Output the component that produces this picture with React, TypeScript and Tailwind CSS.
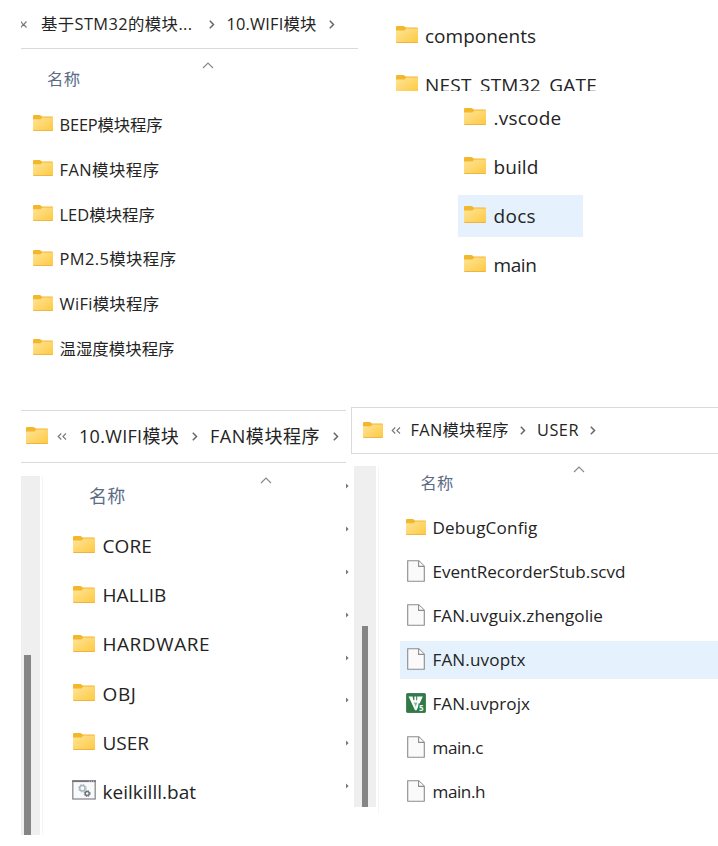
import { useLayoutEffect, useRef } from "react";

type Kind = "folder" | "file" | "keil" | "bat";
type Entry = { name: string; width: number; kind?: Kind; selected?: boolean };

/* Single-line label whose tracking is spread so that it fills `width`. */
function Label({ text, width, className = "" }: { text: string; width: number; className?: string }) {
  const ref = useRef<HTMLSpanElement>(null);
  useLayoutEffect(() => {
    const el = ref.current;
    if (!el) return;
    el.style.letterSpacing = "0px";
    const natural = el.getBoundingClientRect().width;
    el.style.letterSpacing = `${(width - natural) / text.length}px`;
  }, [text, width]);
  return (
    <span className={`shrink-0 whitespace-pre leading-6 ${className}`} style={{ width }}>
      <span ref={ref}>{text}</span>
    </span>
  );
}

function Folder({ className = "" }: { className?: string }) {
  return (
    <svg viewBox="0 0 22 17" preserveAspectRatio="none" className={`shrink-0 ${className}`}>
      <defs>
        <linearGradient id="folderFace" x1="0" y1="0" x2="1" y2="1">
          <stop offset="0" stopColor="#ffe49a" />
          <stop offset="1" stopColor="#fdc93f" />
        </linearGradient>
      </defs>
      <path d="M0 1.2Q0 0 1.2 0H7.4Q8 0 8.5.6L9.8 1.5H20.8Q22 1.5 22 2.7V8H0Z" fill="#f3b72c" />
      <path d="M0 4.6H7.6Q8.4 4.6 9 4L10.4 2.6H22V15.9Q22 17 20.9 17H1.1Q0 17 0 15.9Z" fill="url(#folderFace)" />
      <path d="M.4 16.5H21.6" stroke="#eab544" strokeWidth="1" />
    </svg>
  );
}

function FileIcon() {
  return (
    <svg viewBox="0 0 18 22" className="mb-[3px] ml-[1px] h-[22px] w-[18px] shrink-0">
      <path d="M.7.7H11.8L17.3 6.2V21.3H.7Z" fill="#fafafa" stroke="#8c8c8c" strokeWidth="1.1" />
      <path d="M11.6.9V6.4H17.2" fill="#fff" stroke="#8c8c8c" strokeWidth="1.1" />
    </svg>
  );
}

function KeilIcon() {
  return (
    <svg viewBox="0 0 20 20" className="mb-[3px] h-5 w-5 shrink-0">
      <rect x=".3" y=".3" width="19.4" height="19.4" rx="1.6" fill="#2f7a46" stroke="#24613a" strokeWidth=".6" />
      <path d="M2.6 3.4H6.6L7.4 7.2H8.4V3.4H10.2V7.2H11.2V3.4H16.8L10.6 17.2H9Z" fill="#fff" />
      <path d="M7.6 9.6H11.4L9.7 14Z" fill="#8fbd9c" />
      <path d="M12.4 10.5H19V19H12.4Z" fill="#2f7a46" />
      <text x="12.9" y="17.6" fontSize="8" fontWeight="700" fill="#e9f5ec" fontFamily="Open Sans, sans-serif">5</text>
    </svg>
  );
}

function BatIcon() {
  return (
    <svg viewBox="0 0 24 20" className="mb-[3px] h-5 w-6 shrink-0">
      <rect x=".8" y=".8" width="22.4" height="18.2" fill="#f8f9fa" stroke="#8b8b8f" strokeWidth="1.3" />
      <path d="M.2 1.2H23.8" stroke="#77777b" strokeWidth="1.8" />
      <path d="M17 1.2H22" stroke="#c9c9cc" strokeWidth="1" strokeDasharray="1 1" />
      <circle cx="10.4" cy="8.2" r="2.7" fill="none" stroke="#aab4bd" strokeWidth="1.5" />
      <circle cx="10.4" cy="8.2" r="3.8" fill="none" stroke="#aab4bd" strokeWidth="1" strokeDasharray="1.5 1.5" />
      <circle cx="15.2" cy="13.6" r="2" fill="none" stroke="#6b747d" strokeWidth="1.5" />
      <circle cx="15.2" cy="13.6" r="3" fill="none" stroke="#6b747d" strokeWidth="1" strokeDasharray="1.2 1.2" />
    </svg>
  );
}

function Chevron({ className = "" }: { className?: string }) {
  return (
    <svg viewBox="0 0 6 9" className={`h-[9px] w-[6px] shrink-0 ${className}`}>
      <path d="M.8 .8L4.5 4.5L.8 8.2" fill="none" stroke="#666" strokeWidth="1.5" />
    </svg>
  );
}

function DoubleChevron({ className = "" }: { className?: string }) {
  return (
    <svg viewBox="0 0 10 7" className={`h-[7px] w-[10px] shrink-0 ${className}`}>
      <path d="M4.3.5L1.2 3.5L4.3 6.5M9 .5L5.9 3.5L9 6.5" fill="none" stroke="#777" strokeWidth="1.1" />
    </svg>
  );
}

function SortCaret({ className = "" }: { className?: string }) {
  return (
    <svg viewBox="0 0 12 7" className={`block h-[7px] w-3 ${className}`}>
      <path d="M1 6L6 1L11 6" fill="none" stroke="#8a8a8a" strokeWidth="1.2" />
    </svg>
  );
}

function EntryIcon({ kind = "folder", size }: { kind?: Kind; size: string }) {
  if (kind === "file") return <FileIcon />;
  if (kind === "keil") return <KeilIcon />;
  if (kind === "bat") return <BatIcon />;
  return <Folder className={`mb-[3px] ${size}`} />;
}

const modules: Entry[] = [
  { name: "BEEP模块程序", width: 103 },
  { name: "FAN模块程序", width: 100 },
  { name: "LED模块程序", width: 95.5 },
  { name: "PM2.5模块程序", width: 117 },
  { name: "WiFi模块程序", width: 100 },
  { name: "温湿度模块程序", width: 115 },
];
const gate: Entry[] = [
  { name: ".vscode", width: 68 },
  { name: "build", width: 45 },
  { name: "docs", width: 42.5, selected: true },
  { name: "main", width: 43 },
];
const fan: Entry[] = [
  { name: "CORE", width: 49.5 },
  { name: "HALLIB", width: 64 },
  { name: "HARDWARE", width: 107.5 },
  { name: "OBJ", width: 34 },
  { name: "USER", width: 46.5 },
  { name: "keilkilll.bat", width: 93.5, kind: "bat" },
];
const user: Entry[] = [
  { name: "DebugConfig", width: 105 },
  { name: "EventRecorderStub.scvd", width: 193, kind: "file" },
  { name: "FAN.uvguix.zhengolie", width: 170.5, kind: "file" },
  { name: "FAN.uvoptx", width: 93, kind: "file", selected: true },
  { name: "FAN.uvprojx", width: 97.5, kind: "keil" },
  { name: "main.c", width: 50.5, kind: "file" },
  { name: "main.h", width: 52.5, kind: "file" },
];

function ModulesPanel() {
  return (
    <section className="w-[358px] pl-[21px] text-[16.4px]">
      <div className="flex h-[49px] items-center border-b border-[#d9d9d9]">
        <svg viewBox="0 0 6 7" className="h-[7px] w-[6px] shrink-0">
          <path d="M0 .5L2 3.5L0 6.5M5.5 .5L2.6 3.5L5.5 6.5" fill="none" stroke="#777" strokeWidth="1.1" />
        </svg>
        <Label text="基于STM32的模块..." width={151.5} className="ml-[14px]" />
        <Chevron className="ml-[16px]" />
        <Label text="10.WIFI模块" width={90} className="ml-[12px]" />
        <Chevron className="ml-[12px]" />
      </div>
      <div className="h-[53.6px] pt-[12.5px]">
        <SortCaret className="ml-[181px]" />
        <div className="-mt-[2px] ml-[26px] flex text-[#5b6b86]">
          <Label text="名称" width={33.5} />
        </div>
      </div>
      {modules.map((e) => (
        <div key={e.name} className="flex h-[44.8px] items-center pl-3">
          <EntryIcon size="h-4 w-5" />
          <Label text={e.name} width={e.width} className="ml-[6.5px]" />
        </div>
      ))}
    </section>
  );
}

function GatePanel() {
  return (
    <section className="flex-1 pl-[38px] text-[19px]">
      <div className="h-[91px] overflow-hidden pt-[11px]">
        <div className="flex h-[49.2px] items-center">
          <EntryIcon size="h-[17px] w-[22px]" />
          <Label text="components" width={111} className="ml-[7px]" />
        </div>
        <div className="flex h-[49.2px] items-center">
          <EntryIcon size="h-[17px] w-[22px]" />
          <Label text="NEST_STM32_GATE" width={172} className="ml-[7px]" />
        </div>
      </div>
      <div className="ml-[61.5px] pt-[2px]">
        {gate.map((e) => (
          <div key={e.name} className="flex h-[49.2px] items-center">
            <div className={`flex h-[42px] w-[125.5px] items-center pl-[6.5px] ${e.selected ? "bg-[#e5f2fd]" : ""}`}>
              <EntryIcon size="h-[17px] w-[22px]" />
              <Label text={e.name} width={e.width} className="ml-[7.5px]" />
            </div>
          </div>
        ))}
      </div>
    </section>
  );
}

function Scrollbar({ track, thumb }: { track: string; thumb: string }) {
  return (
    <div className={`flex shrink-0 items-end bg-[#efefef] ${track}`}>
      <div className={`bg-[#858585] ${thumb}`} />
    </div>
  );
}

function FanPanel() {
  return (
    <section className="flex w-[351px] pl-[21px] pt-1 text-[18px]">
      <div className="w-[325px]">
        <div className="flex h-[53px] items-center border-y border-[#dadada] pl-[5px]">
          <Folder className="mb-[2px] h-[17px] w-[22px]" />
          <DoubleChevron className="mb-[1px] ml-[9px]" />
          <Label text="10.WIFI模块" width={100} className="mb-[2px] ml-[12px]" />
          <Chevron className="mb-px ml-[13px]" />
          <Label text="FAN模块程序" width={110} className="mb-[2px] ml-[12px]" />
          <Chevron className="mb-px ml-[13px]" />
        </div>
        <div className="flex pt-[13px]">
          <Scrollbar track="h-[359px] w-[18.5px] pl-[2.5px]" thumb="h-[180px] w-[7.5px]" />
          <div className="ml-[2px] flex-1 border-l border-[#f6f6f6]">
            <SortCaret className="ml-[217.5px] mt-[1px]" />
            <div className="ml-[46.5px] flex h-[37.4px] text-[#5b6b86]">
              <Label text="名称" width={36.5} />
            </div>
            {fan.map((e) => (
              <div key={e.name} className="flex h-[49.2px] items-center pl-[30.5px] text-[19px]">
                <span className={`flex shrink-0 ${e.kind === "bat" ? "-ml-px w-[30.5px]" : "mt-px w-[29.5px]"}`}>
                  <EntryIcon kind={e.kind} size="h-[17px] w-[22px]" />
                </span>
                <Label text={e.name} width={e.width} />
              </div>
            ))}
          </div>
        </div>
      </div>
      <div className="flex flex-col gap-[36.9px] pt-[73px]">
        {Array.from({ length: 8 }, (_, i) => (
          <svg key={i} viewBox="0 0 3 6" className="h-[6px] w-[3px] shrink-0">
            <path d="M0 .6L2.6 3L0 5.4Z" fill="#777" />
          </svg>
        ))}
      </div>
    </section>
  );
}

function UserPanel() {
  return (
    <section className="flex-1 text-[16.3px]">
      <div className="mt-px flex h-[47px] items-center border border-r-0 border-[#dadada] pl-[11px]">
        <Folder className="mb-[2px] h-4 w-5" />
        <DoubleChevron className="mb-px ml-[8px]" />
        <Label text="FAN模块程序" width={98.5} className="mb-[2px] ml-[9.5px]" />
        <Chevron className="mb-px ml-[11px]" />
        <Label text="USER" width={42} className="mb-[2px] ml-[11px]" />
        <Chevron className="mb-px ml-[10.5px]" />
      </div>
      <div className="flex pl-[3px] pt-[12px]">
        <Scrollbar track="h-[341px] w-[21.5px] pl-[7.5px]" thumb="h-[181px] w-[6.5px]" />
        <div className="ml-[2px] flex-1 border-l border-[#f6f6f6]">
          <SortCaret className="ml-[194px]" />
          <div className="ml-[42px] flex h-[33px] text-[#5b6b86]">
            <Label text="名称" width={33} className="-mt-[2px]" />
          </div>
          {user.map((e) => (
            <div key={e.name} className="flex h-[44px] items-center pl-[21.5px] text-[17.1px]">
              <div className={`flex h-[37.5px] flex-1 items-center pl-[6px] ${e.selected ? "bg-[#e5f2fd]" : ""}`}>
                <span className="flex w-[26.5px] shrink-0">
                  <EntryIcon kind={e.kind} size="h-4 w-5" />
                </span>
                <Label text={e.name} width={e.width} />
              </div>
            </div>
          ))}
        </div>
      </div>
    </section>
  );
}

export default function App() {
  return (
    <main className="h-[846px] w-[718px] overflow-hidden bg-white text-[#242424] [font-family:'Open_Sans','Noto_Sans_CJK_SC',sans-serif]">
      <div className="flex h-[406px]">
        <ModulesPanel />
        <GatePanel />
      </div>
      <div className="flex h-[440px]">
        <FanPanel />
        <UserPanel />
      </div>
    </main>
  );
}
